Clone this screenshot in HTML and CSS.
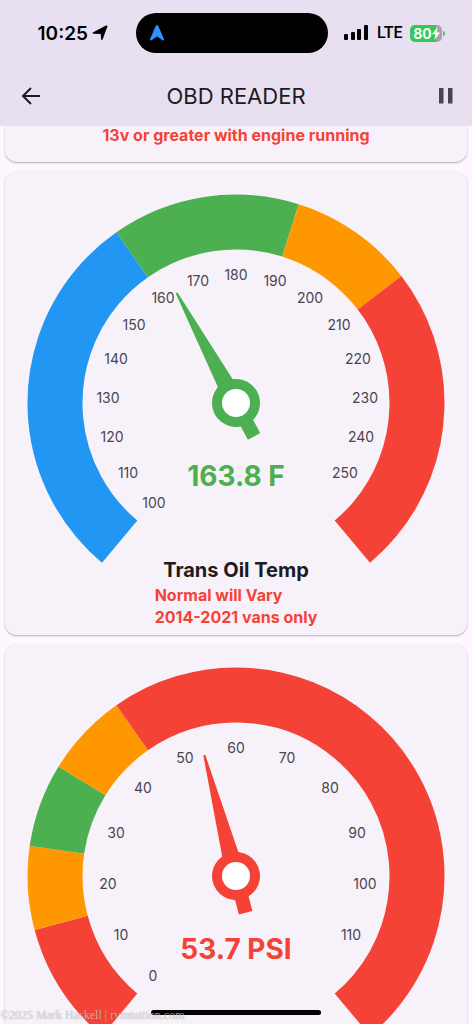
FILE: index.html
```html
<!DOCTYPE html>
<html lang="en">
<head>
<meta charset="utf-8">
<meta name="viewport" content="width=device-width, initial-scale=1">
<title>OBD Reader</title>
<link rel="stylesheet" href="styles.css">
</head>
<body>
<header class="top">
  <div class="status">
    <div class="status-left">
      <span class="clock">10:25</span>
      <svg class="loc" viewBox="0 0 16 16" aria-hidden="true"><path d="M1.200 7.300 14 .6q1.700-.6 1.300 1.100L10.600 14.400q-.9 1.700-1.400-.1L8.700 8.900 1.700 8.700Q-.2 8.200 1.200 7.300Z"/></svg>
    </div>
    <div class="island">
      <svg class="nav-arrow" viewBox="0 0 14 16" aria-hidden="true"><path d="M7 0Q8 0 8.500 1.500L13.900 14Q14.300 16 12.500 15.200L7 11.600 1.500 15.200Q-.3 16 .1 14L5.500 1.500Q6 0 7 0Z"/></svg>
    </div>
    <div class="status-right">
      <svg class="bars" viewBox="0 0 25 16" aria-hidden="true"><rect x="0" y="9" width="4" height="6" rx="1"/><rect x="7" y="7" width="4" height="8" rx="1"/><rect x="13" y="4" width="4" height="11" rx="1"/><rect x="20" y="0" width="4" height="15" rx="1"/></svg>
      <span class="lte">LTE</span>
      <div class="battery"><span class="level">80</span><svg class="bolt" viewBox="0 0 8 13" aria-hidden="true"><path d="M5.500 0 0 7.300H3.500L2.300 13 8 5.500H4.600Z"/></svg></div>
    </div>
  </div>
  <nav class="appbar">
    <button class="icon-btn back" aria-label="Back"><svg viewBox="0 0 24 24" class="icon"><path class="line" d="M12 4 4 12l8 8M4.500 12H21"/></svg></button>
    <h1 class="title">OBD READER</h1>
    <button class="icon-btn pause-btn" aria-label="Pause"><svg viewBox="0 0 24 24" class="icon"><path class="pause" d="M5 4h4.500v15.500H5zM14 4h4.500v15.500h-4.500z"/></svg></button>
  </nav>
</header>
<main class="list">
  <section class="card card-cut"><p class="note">13v or greater with engine running</p></section>

  <section class="card">
    <svg class="gauge" viewBox="-209 -209 418 372" role="img" aria-label="Trans Oil Temp gauge">
      <g class="ring" transform="rotate(130)">
        <circle class="blue" r="181" pathLength="360" stroke-dasharray="105 360"/>
        <circle class="green" r="181" pathLength="360" stroke-dasharray="52.5 360" stroke-dashoffset="-105"/>
        <circle class="orange" r="181" pathLength="360" stroke-dasharray="35 360" stroke-dashoffset="-157.5"/>
        <circle class="red" r="181" pathLength="360" stroke-dasharray="87.5 360" stroke-dashoffset="-192.5"/>
      </g>
      <g class="ticks">
        <text x="-82" y="105">100</text><text x="-108" y="75">110</text><text x="-124" y="39">120</text><text x="-128" y="0">130</text><text x="-120" y="-39">140</text><text x="-102" y="-73">150</text><text x="-73" y="-100">160</text><text x="-38" y="-117">170</text><text x="0" y="-123">180</text><text x="39" y="-117">190</text><text x="74" y="-100">200</text><text x="103" y="-73">210</text><text x="122" y="-39">220</text><text x="129" y="0">230</text><text x="125" y="39">240</text><text x="109" y="75">250</text>
      </g>
      <g class="needle-green" transform="rotate(-28.350)"><path d="M-10 0-1-125H1L10 0ZM-7 0H7V38H-7Z"/><circle r="24"/></g>
      <circle class="hub" r="14"/>
      <text class="value needle-green" x="0" y="83">163.8 F</text>
    </svg>
    <div class="caption">
      <h2 class="name">Trans Oil Temp</h2>
      <p class="note">Normal will Vary<br>2014-2021 vans only</p>
    </div>
  </section>

  <section class="card">
    <svg class="gauge" viewBox="-209 -209 418 372" role="img" aria-label="Pressure gauge">
      <g class="ring" transform="rotate(130)">
        <circle class="red" r="181" pathLength="360" stroke-dasharray="35 360"/>
        <circle class="orange" r="181" pathLength="360" stroke-dasharray="23.333 360" stroke-dashoffset="-35"/>
        <circle class="green" r="181" pathLength="360" stroke-dasharray="23.333 360" stroke-dashoffset="-58.333"/>
        <circle class="orange" r="181" pathLength="360" stroke-dasharray="23.333 360" stroke-dashoffset="-81.667"/>
        <circle class="red" r="181" pathLength="360" stroke-dasharray="175 360" stroke-dashoffset="-105"/>
      </g>
      <g class="ticks">
        <text x="-83" y="105">0</text><text x="-115" y="64">10</text><text x="-128" y="13">20</text><text x="-120" y="-38">30</text><text x="-93" y="-83">40</text><text x="-51" y="-113">50</text><text x="0" y="-123">60</text><text x="51" y="-113">70</text><text x="94" y="-83">80</text><text x="121" y="-38">90</text><text x="129" y="13">100</text><text x="115" y="64">110</text>
      </g>
      <g class="needle-red" transform="rotate(-14.700)"><path d="M-10 0-1-125H1L10 0ZM-7 0H7V38H-7Z"/><circle r="24"/></g>
      <circle class="hub" r="14"/>
      <text class="value needle-red" x="0" y="83">53.7 PSI</text>
    </svg>
  </section>
</main>
<div class="home-bar"></div>
<div class="credit">©2025 Mark Haskell | rvintuition.com</div>
</body>
</html>
```
FILE: styles.css
```css
* { box-sizing: border-box; }
body { margin: 0; height: 100vh; display: flex; flex-direction: column; overflow: hidden; position: relative; background: #fef7ff; color: #1d1b20; font-family: Inter, sans-serif; }
h1, h2, p { margin: 0; }
.top { flex: none; background: #e8dff0; }
.status { display: grid; grid-template-columns: 1fr 192px 1fr; align-items: center; height: 66px; padding-right: 8px; }
.status-left { display: flex; align-items: center; justify-content: flex-end; gap: 4px; padding-right: 28px; color: #000; }
.clock { font-size: 19px; font-weight: 600; }
.loc { width: 16px; height: 16px; }
.island { height: 40px; border-radius: 20px; background: #000; display: flex; align-items: center; padding-left: 14px; }
.nav-arrow { width: 14px; height: 16px; fill: #3390ff; }
.status-right { display: flex; align-items: center; gap: 8px; padding-left: 16px; }
.bars { width: 25px; height: 16px; }
.lte { font-family: Roboto, sans-serif; font-size: 16px; line-height: 18px; font-weight: 500; color: #000; }
.battery { position: relative; display: flex; align-items: center; justify-content: center; width: 32px; height: 17px; border-radius: 5px; background: linear-gradient(90deg, #34c759 80%, #a9a3ad 80%); color: #fff; }
.battery::after { content: ""; position: absolute; right: -3px; top: 6px; width: 2px; height: 5px; border-radius: 0 2px 2px 0; background: #64b47c; }
.level { font-size: 14px; font-weight: 700; }
.bolt { width: 8px; height: 13px; fill: #fff; }
.appbar { display: grid; grid-template-columns: 1fr auto 1fr; align-items: center; height: 60px; padding: 0 14px; }
.icon-btn { display: flex; padding: 0; border: 0; background: none; }
.back { justify-self: start; padding-left: 5px; }
.pause-btn { justify-self: end; }
.icon { width: 24px; height: 24px; }
.line { fill: none; stroke: #1d1b20; stroke-width: 2; }
.pause { fill: #49454f; }
.title { font-size: 22px; font-weight: 400; }
.list { flex: 1; min-height: 0; overflow: hidden; display: flex; flex-direction: column; gap: 9px; padding: 0 5px; }
.card { flex: none; display: flex; flex-direction: column; align-items: center; padding: 23px 16px 7px; border-radius: 12px; background: #f7f2fa; box-shadow: 0 1px 2px rgba(0, 0, 0, .3); }
.card-cut { padding: 0 16px 18px; border-radius: 0 0 12px 12px; }
.card-cut .note { line-height: 18px; }
.gauge { display: block; width: 100%; max-width: 418px; }
.caption { margin-top: -10px; }
.ring circle { fill: none; stroke-width: 55; }
.blue { stroke: #2196f3; }
.green { stroke: #4caf50; }
.orange { stroke: #ff9800; }
.red { stroke: #f44336; }
.ticks { font-size: 14px; fill: #49454f; text-anchor: middle; }
.needle-green { fill: #4caf50; }
.needle-red { fill: #f44336; }
.hub { fill: #fff; }
.value { font-size: 28px; font-weight: 700; text-anchor: middle; }
.name { font-size: 20px; line-height: 28px; font-weight: 700; text-align: center; }
.note { color: #f44336; font-size: 16px; line-height: 22px; font-weight: 700; }
.home-bar { position: absolute; left: 50%; bottom: 9px; width: 36%; height: 5px; transform: translateX(-50%); border-radius: 3px; background: #000; }
.credit { position: absolute; left: 0; bottom: 1px; color: rgba(255, 255, 255, .6); font: 12px/16px "Liberation Serif", serif; text-shadow: 0 0 1px rgba(0, 0, 0, .4); }
```
